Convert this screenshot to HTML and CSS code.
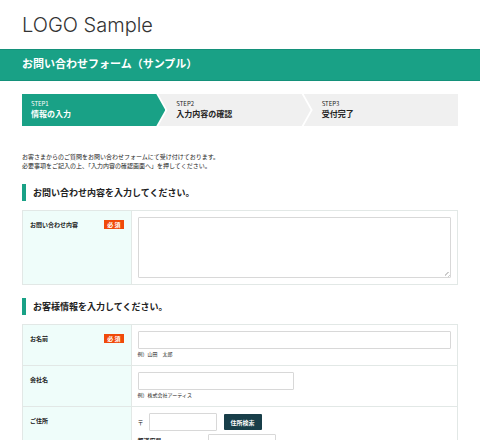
FILE: index.html
```html
<!DOCTYPE html>
<html lang="ja">
<head>
<meta charset="utf-8">
<meta name="viewport" content="width=device-width, initial-scale=1">
<title>お問い合わせフォーム（サンプル）</title>
<link rel="stylesheet" href="styles.css">
</head>
<body>
<header class="site-header"><a class="logo" href="#">LOGO Sample</a></header>
<div class="title-bar"><h1>お問い合わせフォーム（サンプル）</h1></div>
<main class="content">
  <ol class="steps">
    <li class="step step-current"><span>STEP1</span><strong>情報の入力</strong></li>
    <li class="step"><span>STEP2</span><strong>入力内容の確認</strong></li>
    <li class="step"><span>STEP3</span><strong>受付完了</strong></li>
  </ol>
  <p class="intro">お客さまからのご質問をお問い合わせフォームにて受け付けております。<br>必要事項をご記入の上、「入力内容の確認画面へ」を押してください。</p>
  <form>
    <h2>お問い合わせ内容を入力してください。</h2>
    <div class="fields">
      <div class="row">
        <div class="caption"><label for="message">お問い合わせ内容</label><span class="required">必 須</span></div>
        <div class="entry"><textarea id="message"></textarea></div>
      </div>
    </div>
    <h2>お客様情報を入力してください。</h2>
    <div class="fields">
      <div class="row">
        <div class="caption"><label for="name">お名前</label><span class="required">必 須</span></div>
        <div class="entry"><input id="name" type="text"><p class="hint">例）山田　太郎</p></div>
      </div>
      <div class="row">
        <div class="caption"><label for="company">会社名</label></div>
        <div class="entry"><input id="company" class="half" type="text"><p class="hint">例）株式会社アーティス</p></div>
      </div>
      <div class="row">
        <div class="caption"><label for="zip">ご住所</label></div>
        <div class="entry">
          <div class="line"><span class="mark">〒</span><input id="zip" class="short" type="text"><button type="button">住所検索</button></div>
          <div class="line line-top"><label class="part" for="prefecture">都道府県</label><input id="prefecture" class="short" type="text"></div>
        </div>
      </div>
    </div>
  </form>
</main>
</body>
</html>
```
FILE: styles.css
```css
* { box-sizing: border-box; }
body {
  margin: 0;
  background: #fff;
  color: #222;
  font: 6px/9px "Noto Sans CJK JP", sans-serif;
}
h1, h2, p, ol { margin: 0; padding: 0; }

.site-header { padding: 13px 22px 12px; }
.logo {
  display: block;
  color: #333;
  font: 300 20px/24px Inter, "Liberation Sans", sans-serif;
  text-decoration: none;
}
.title-bar {
  padding: 6px 22px 9px;
  background: #19a186;
  border-top: 1px solid #14917a;
  border-bottom: 1px solid #14917a;
  color: #fff;
}
h1 { font-size: 11px; line-height: 15px; }
.content { padding: 13px 22px 0; }

.steps {
  display: grid;
  grid-template-columns: repeat(3, 1fr);
  list-style: none;
}
.step {
  margin: 0 2px 0 -9px;
  padding: 6px 0 6px 18px;
  background: #f0f0f0;
  clip-path: polygon(0 0, calc(100% - 9px) 0, 100% 50%, calc(100% - 9px) 100%, 0 100%, 9px 50%);
}
.step:first-child {
  margin-left: 0;
  padding-left: 9px;
  clip-path: polygon(0 0, calc(100% - 9px) 0, 100% 50%, calc(100% - 9px) 100%, 0 100%);
}
.step:last-child {
  margin-right: 0;
  clip-path: polygon(0 0, 100% 0, 100% 100%, 0 100%, 9px 50%);
}
.step-current { background: #19a186; color: #fff; }
.step span, .step strong { display: block; }
.step span { line-height: 8px; }
.step strong { font-size: 8px; line-height: 12px; }

.intro { margin: 26px 0 14px; }

h2 {
  padding-left: 7px;
  border-left: 4px solid #19a186;
  font-size: 9px;
  line-height: 17px;
}
.fields {
  margin: 9px 0 13px;
  border: 1px solid #e2e8e6;
}
.row { display: grid; grid-template-columns: 1fr 3fr; }
.row + .row { border-top: 1px solid #e2e8e6; }
.caption {
  display: flex;
  justify-content: space-between;
  align-items: flex-start;
  padding: 9px 7px;
  background: #effdfa;
  border-right: 1px solid #e2e8e6;
  font-weight: bold;
}
.required {
  padding: 0 3px;
  background: #f04a0a;
  color: #fff;
}
.entry { padding: 6px; }
input, textarea {
  display: block;
  width: 100%;
  height: 18px;
  margin: 0;
  padding: 2px 4px;
  border: 1px solid #d8d8d8;
  border-radius: 1px;
  background: #fff;
  font: inherit;
}
textarea { height: 61px; }
textarea::-webkit-resizer {
  background: repeating-linear-gradient(135deg, #fff 0 2px, #ccc 2px 3px);
  background-size: 5px 5px;
  background-position: right bottom;
  background-repeat: no-repeat;
}
.half { width: 50%; }
.short { width: 68px; }
.hint { font-size: 5px; padding-bottom: 1px; }
.line { display: flex; align-items: center; gap: 5px; margin-bottom: 3px; }
.line-top { align-items: flex-start; }
.mark { width: 6px; }
.part { width: 65px; padding-top: 2px; font-weight: bold; }
button {
  height: 16px;
  margin-left: 2px;
  padding: 0 7px;
  border: 0;
  border-radius: 1px;
  background: #183e49;
  color: #fff;
  font: bold 6px/9px "Noto Sans CJK JP", sans-serif;
}
```
